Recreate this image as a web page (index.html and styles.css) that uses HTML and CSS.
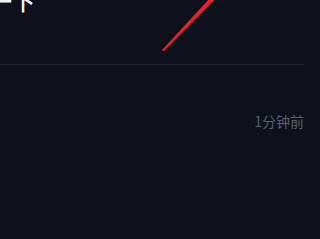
FILE: index.html
```html
<!DOCTYPE html>
<html lang="zh">
<head>
<meta charset="utf-8">
<link rel="stylesheet" href="styles.css">
</head>
<body>
<div class="page">
  <div class="title">一下</div>
  <div class="divider"></div>
  <div class="meta"><span class="time">1分钟前</span></div>
  <svg class="stroke" width="320" height="239" viewBox="0 0 320 239">
    <polygon points="214,0.6 210.6,-2.6 162.7,49.2 164.3,50.8" fill="#e3222b"/>
    <circle cx="163.5" cy="50" r="1.15" fill="#e3222b"/>
  </svg>
</div>
</body>
</html>
```
FILE: styles.css
```css
html, body {
  margin: 0;
  padding: 0;
  background: #0e111b;
  overflow: hidden;
}
.page {
  position: relative;
  display: flex;
  flex-direction: column;
  width: 320px;
  height: 239px;
  font-family: "Noto Sans CJK SC", "Noto Sans", sans-serif;
}
.title {
  color: #f2f2f4;
  font-size: 23px;
  font-weight: 500;
  line-height: 30px;
  margin-top: -15px;
  margin-left: -11px;
  height: 30px;
  white-space: nowrap;
}
.divider {
  height: 1px;
  background: #1d202b;
  margin: 49px 16px 0 0;
}
.meta {
  display: flex;
  justify-content: flex-end;
  padding: 46px 16px 0 0;
}
.time {
  color: #5b5e69;
  font-size: 14px;
  line-height: 20px;
}
.stroke {
  position: absolute;
  left: 0;
  top: 0;
}
```
